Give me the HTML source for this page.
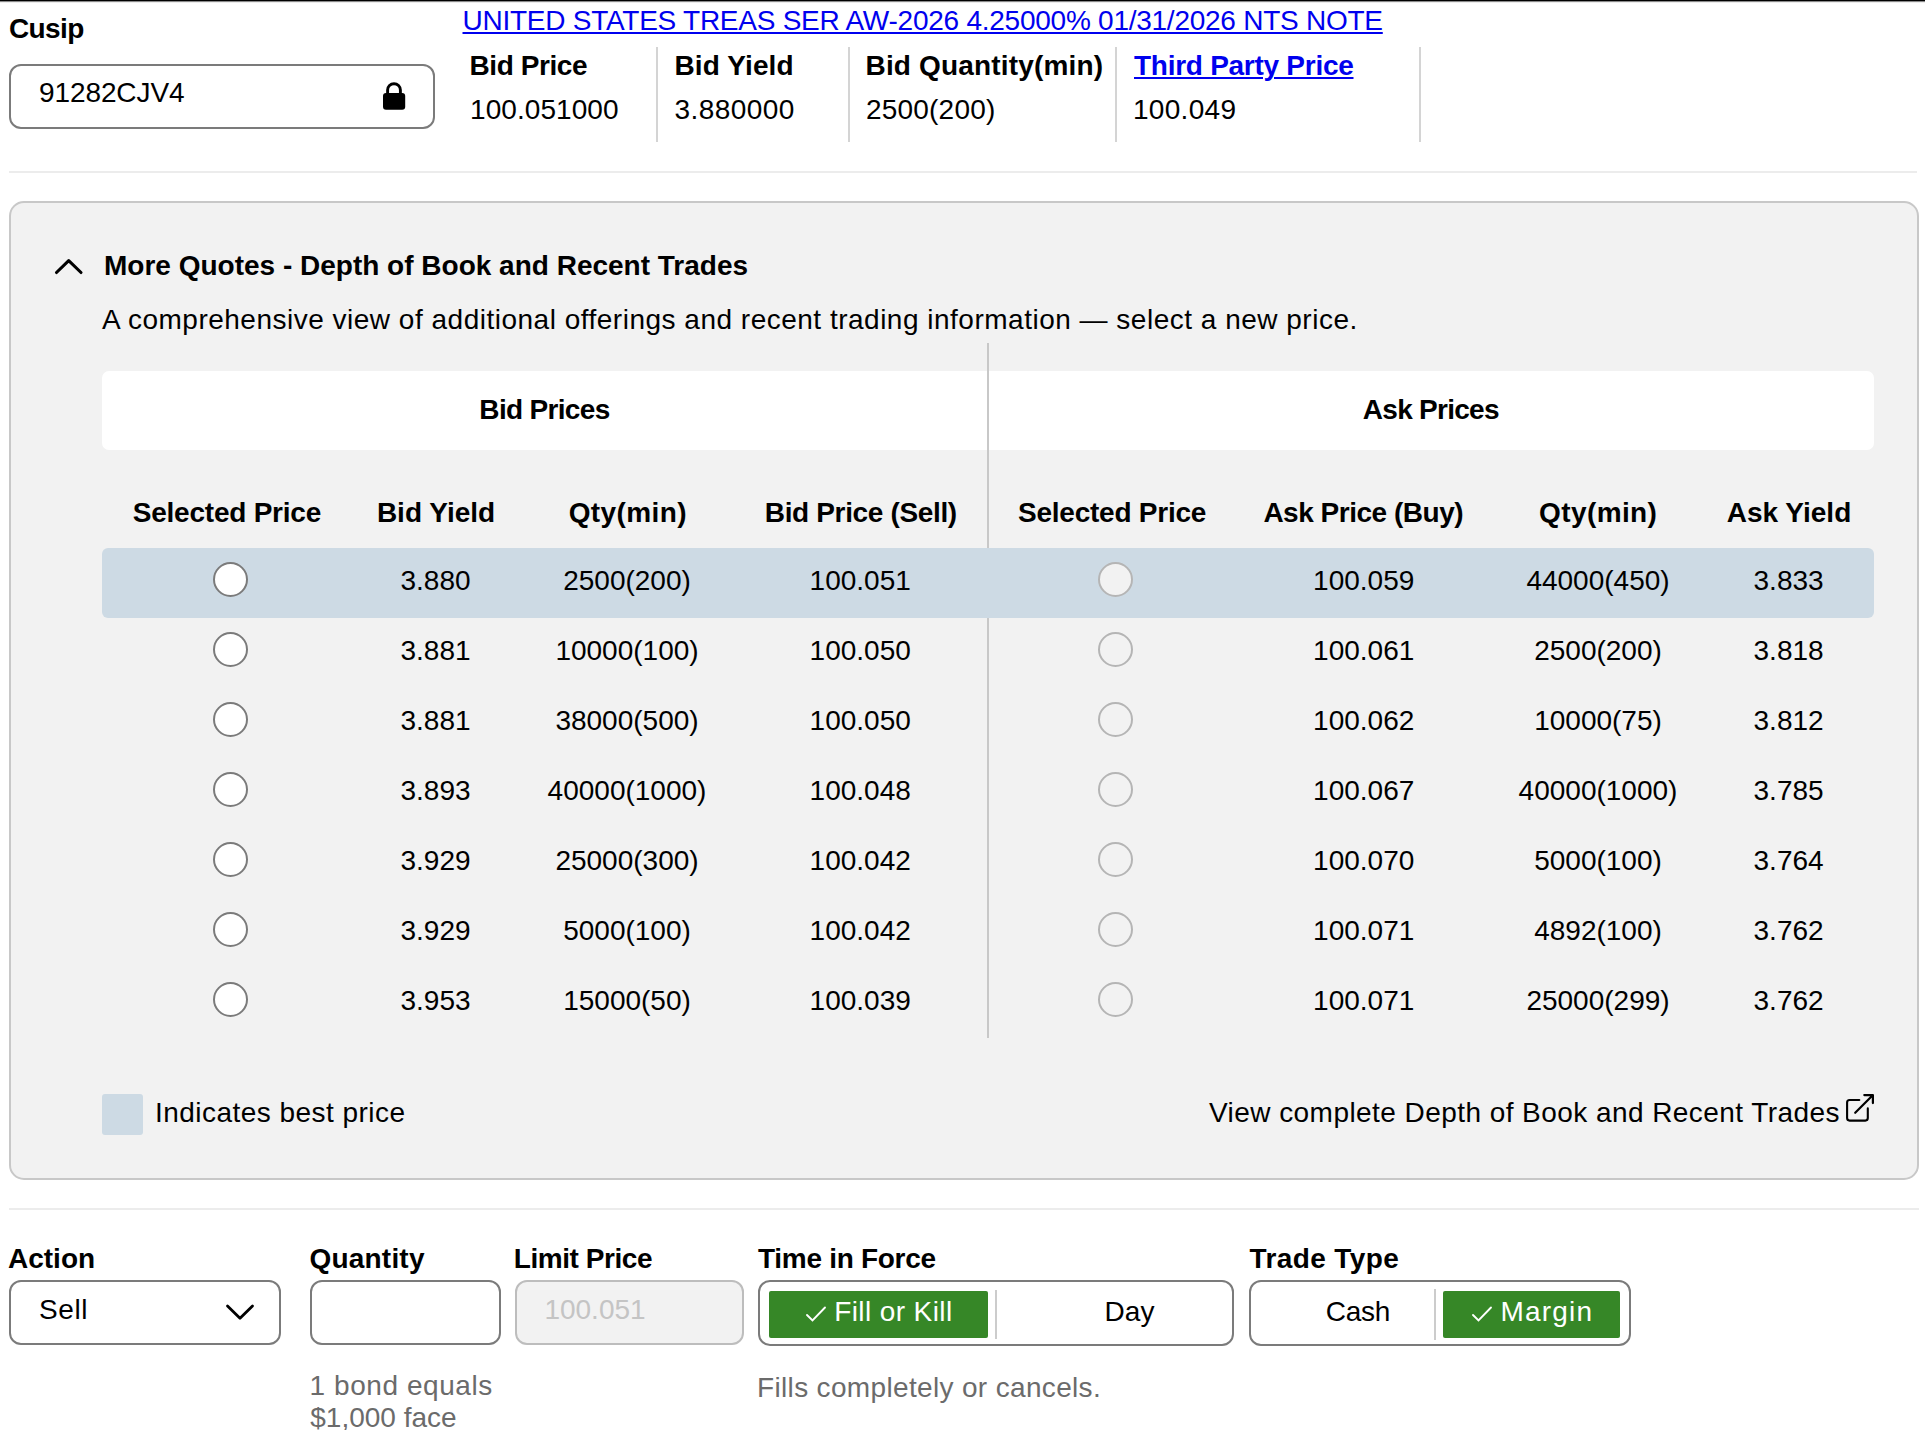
<!DOCTYPE html>
<html><head><meta charset="utf-8"><title>Bond Trade</title>
<style>
html,body{margin:0;padding:0;background:#fff;width:1925px;height:1430px;overflow:hidden;}
body{position:relative;font-family:"Liberation Sans", sans-serif;color:#000;}
</style></head><body>
<div style="position:absolute;left:0px;top:0px;width:1925px;height:1px;background:#000"></div>
<div style="position:absolute;left:0px;top:1px;width:1925px;height:1px;background:#8a8a8a"></div>
<div style="position:absolute;left:0px;top:2px;width:1925px;height:1px;background:#ececec"></div>
<div style="position:absolute;top:15px;font-size:28px;line-height:1;white-space:nowrap;color:#000;font-weight:700;letter-spacing:-0.6px;left:9px;">Cusip</div>
<div style="position:absolute;left:9px;top:64px;width:426px;height:65px;box-sizing:border-box;border:2px solid #7b7b7b;border-radius:12px;background:#fff"></div>
<div style="position:absolute;top:79px;font-size:28px;line-height:1;white-space:nowrap;color:#000;letter-spacing:-0.1px;left:39px;">91282CJV4</div>
<svg style="position:absolute;left:380px;top:80px" width="28" height="32" viewBox="0 0 28 32">
<path d="M7.6 13.5 V10.1 A6.4 6.4 0 0 1 20.4 10.1 V13.5" fill="none" stroke="#000" stroke-width="2.9"/>
<rect x="3" y="13" width="22.2" height="16.8" rx="3" fill="#000"/></svg>
<div style="position:absolute;top:7px;font-size:28px;line-height:1;white-space:nowrap;color:#0000ee;letter-spacing:-0.25px;left:462.5px;text-decoration:underline;text-underline-offset:2px;text-decoration-thickness:2px;">UNITED STATES TREAS SER AW-2026 4.25000% 01/31/2026 NTS NOTE</div>
<div style="position:absolute;top:52px;font-size:28px;line-height:1;white-space:nowrap;color:#000;font-weight:700;letter-spacing:-0.42px;left:469.5px;">Bid Price</div>
<div style="position:absolute;top:96px;font-size:28px;line-height:1;white-space:nowrap;color:#000;letter-spacing:0.07px;left:470px;">100.051000</div>
<div style="position:absolute;top:52px;font-size:28px;line-height:1;white-space:nowrap;color:#000;font-weight:700;letter-spacing:0.1px;left:674.5px;">Bid Yield</div>
<div style="position:absolute;top:96px;font-size:28px;line-height:1;white-space:nowrap;color:#000;letter-spacing:0.43px;left:674.5px;">3.880000</div>
<div style="position:absolute;top:52px;font-size:28px;line-height:1;white-space:nowrap;color:#000;font-weight:700;letter-spacing:0.17px;left:865.5px;">Bid Quantity(min)</div>
<div style="position:absolute;top:96px;font-size:28px;line-height:1;white-space:nowrap;color:#000;letter-spacing:0.2px;left:866px;">2500(200)</div>
<div style="position:absolute;top:52px;font-size:28px;line-height:1;white-space:nowrap;color:#0000ee;font-weight:700;letter-spacing:-0.27px;left:1134px;text-decoration:underline;text-underline-offset:2px;text-decoration-thickness:2px;">Third Party Price</div>
<div style="position:absolute;top:96px;font-size:28px;line-height:1;white-space:nowrap;color:#000;letter-spacing:0.3px;left:1133px;">100.049</div>
<div style="position:absolute;left:656px;top:47px;width:2px;height:95px;background:#d4d4d4"></div>
<div style="position:absolute;left:848px;top:47px;width:2px;height:95px;background:#d4d4d4"></div>
<div style="position:absolute;left:1115px;top:47px;width:2px;height:95px;background:#d4d4d4"></div>
<div style="position:absolute;left:1419px;top:47px;width:2px;height:95px;background:#d4d4d4"></div>
<div style="position:absolute;left:9px;top:171px;width:1908px;height:2px;background:#ececec"></div>
<div style="position:absolute;left:9px;top:201px;width:1910px;height:979px;box-sizing:border-box;border:2px solid #c8c8c8;border-radius:15px;background:#f2f2f2"></div>
<svg style="position:absolute;left:50px;top:252px" width="40" height="28" viewBox="0 0 40 28">
<polyline points="6.5,20.5 18.7,8.6 31,20.5" fill="none" stroke="#000" stroke-width="3.1" stroke-linecap="round" stroke-linejoin="round"/></svg>
<div style="position:absolute;top:252px;font-size:28px;line-height:1;white-space:nowrap;color:#000;font-weight:700;left:104px;">More Quotes - Depth of Book and Recent Trades</div>
<div style="position:absolute;top:306px;font-size:28px;line-height:1;white-space:nowrap;color:#000;letter-spacing:0.5px;left:102px;">A comprehensive view of additional offerings and recent trading information — select a new price.</div>
<div style="position:absolute;left:102px;top:371px;width:1772px;height:79px;background:#fff;border-radius:7px"></div>
<div style="position:absolute;left:987px;top:343px;width:2px;height:695px;background:#c8c8c8"></div>
<div style="position:absolute;top:396px;font-size:28px;line-height:1;white-space:nowrap;color:#000;font-weight:700;letter-spacing:-0.67px;left:44.799999999999955px;width:1000px;text-align:center;text-indent:-0.67px;">Bid Prices</div>
<div style="position:absolute;top:396px;font-size:28px;line-height:1;white-space:nowrap;color:#000;font-weight:700;letter-spacing:-0.73px;left:931.2px;width:1000px;text-align:center;text-indent:-0.73px;">Ask Prices</div>
<div style="position:absolute;top:499px;font-size:28px;line-height:1;white-space:nowrap;color:#000;font-weight:700;letter-spacing:-0.23px;left:-273px;width:1000px;text-align:center;text-indent:-0.23px;">Selected Price</div>
<div style="position:absolute;top:499px;font-size:28px;line-height:1;white-space:nowrap;color:#000;font-weight:700;left:-64px;width:1000px;text-align:center;">Bid Yield</div>
<div style="position:absolute;top:499px;font-size:28px;line-height:1;white-space:nowrap;color:#000;font-weight:700;letter-spacing:0.38px;left:127.60000000000002px;width:1000px;text-align:center;text-indent:0.38px;">Qty(min)</div>
<div style="position:absolute;top:499px;font-size:28px;line-height:1;white-space:nowrap;color:#000;font-weight:700;letter-spacing:-0.35px;left:361px;width:1000px;text-align:center;text-indent:-0.35px;">Bid Price (Sell)</div>
<div style="position:absolute;top:499px;font-size:28px;line-height:1;white-space:nowrap;color:#000;font-weight:700;letter-spacing:-0.23px;left:612.2px;width:1000px;text-align:center;text-indent:-0.23px;">Selected Price</div>
<div style="position:absolute;top:499px;font-size:28px;line-height:1;white-space:nowrap;color:#000;font-weight:700;letter-spacing:-0.48px;left:863.5px;width:1000px;text-align:center;text-indent:-0.48px;">Ask Price (Buy)</div>
<div style="position:absolute;top:499px;font-size:28px;line-height:1;white-space:nowrap;color:#000;font-weight:700;letter-spacing:0.38px;left:1098px;width:1000px;text-align:center;text-indent:0.38px;">Qty(min)</div>
<div style="position:absolute;top:499px;font-size:28px;line-height:1;white-space:nowrap;color:#000;font-weight:700;left:1289px;width:1000px;text-align:center;">Ask Yield</div>
<div style="position:absolute;left:102px;top:548px;width:1772px;height:70px;background:#cddae4;border-radius:6px"></div>
<div style="position:absolute;left:212.9px;top:562.0px;width:35px;height:35px;box-sizing:border-box;border:2px solid #7b7b7b;border-radius:50%;background:#fff"></div>
<div style="position:absolute;left:1098.0px;top:562.0px;width:35px;height:35px;box-sizing:border-box;border:2px solid #b5b5b5;border-radius:50%;background:#f2f2f2"></div>
<div style="position:absolute;top:567px;font-size:28px;line-height:1;white-space:nowrap;color:#000;left:-64.5px;width:1000px;text-align:center;">3.880</div>
<div style="position:absolute;top:567px;font-size:28px;line-height:1;white-space:nowrap;color:#000;left:127px;width:1000px;text-align:center;">2500(200)</div>
<div style="position:absolute;top:567px;font-size:28px;line-height:1;white-space:nowrap;color:#000;left:360.20000000000005px;width:1000px;text-align:center;">100.051</div>
<div style="position:absolute;top:567px;font-size:28px;line-height:1;white-space:nowrap;color:#000;left:863.7px;width:1000px;text-align:center;">100.059</div>
<div style="position:absolute;top:567px;font-size:28px;line-height:1;white-space:nowrap;color:#000;left:1098px;width:1000px;text-align:center;">44000(450)</div>
<div style="position:absolute;top:567px;font-size:28px;line-height:1;white-space:nowrap;color:#000;left:1288.6px;width:1000px;text-align:center;">3.833</div>
<div style="position:absolute;left:212.9px;top:632.0px;width:35px;height:35px;box-sizing:border-box;border:2px solid #7b7b7b;border-radius:50%;background:#fff"></div>
<div style="position:absolute;left:1098.0px;top:632.0px;width:35px;height:35px;box-sizing:border-box;border:2px solid #b5b5b5;border-radius:50%;background:#f2f2f2"></div>
<div style="position:absolute;top:637px;font-size:28px;line-height:1;white-space:nowrap;color:#000;left:-64.5px;width:1000px;text-align:center;">3.881</div>
<div style="position:absolute;top:637px;font-size:28px;line-height:1;white-space:nowrap;color:#000;left:127px;width:1000px;text-align:center;">10000(100)</div>
<div style="position:absolute;top:637px;font-size:28px;line-height:1;white-space:nowrap;color:#000;left:360.20000000000005px;width:1000px;text-align:center;">100.050</div>
<div style="position:absolute;top:637px;font-size:28px;line-height:1;white-space:nowrap;color:#000;left:863.7px;width:1000px;text-align:center;">100.061</div>
<div style="position:absolute;top:637px;font-size:28px;line-height:1;white-space:nowrap;color:#000;left:1098px;width:1000px;text-align:center;">2500(200)</div>
<div style="position:absolute;top:637px;font-size:28px;line-height:1;white-space:nowrap;color:#000;left:1288.6px;width:1000px;text-align:center;">3.818</div>
<div style="position:absolute;left:212.9px;top:702.0px;width:35px;height:35px;box-sizing:border-box;border:2px solid #7b7b7b;border-radius:50%;background:#fff"></div>
<div style="position:absolute;left:1098.0px;top:702.0px;width:35px;height:35px;box-sizing:border-box;border:2px solid #b5b5b5;border-radius:50%;background:#f2f2f2"></div>
<div style="position:absolute;top:707px;font-size:28px;line-height:1;white-space:nowrap;color:#000;left:-64.5px;width:1000px;text-align:center;">3.881</div>
<div style="position:absolute;top:707px;font-size:28px;line-height:1;white-space:nowrap;color:#000;left:127px;width:1000px;text-align:center;">38000(500)</div>
<div style="position:absolute;top:707px;font-size:28px;line-height:1;white-space:nowrap;color:#000;left:360.20000000000005px;width:1000px;text-align:center;">100.050</div>
<div style="position:absolute;top:707px;font-size:28px;line-height:1;white-space:nowrap;color:#000;left:863.7px;width:1000px;text-align:center;">100.062</div>
<div style="position:absolute;top:707px;font-size:28px;line-height:1;white-space:nowrap;color:#000;left:1098px;width:1000px;text-align:center;">10000(75)</div>
<div style="position:absolute;top:707px;font-size:28px;line-height:1;white-space:nowrap;color:#000;left:1288.6px;width:1000px;text-align:center;">3.812</div>
<div style="position:absolute;left:212.9px;top:772.0px;width:35px;height:35px;box-sizing:border-box;border:2px solid #7b7b7b;border-radius:50%;background:#fff"></div>
<div style="position:absolute;left:1098.0px;top:772.0px;width:35px;height:35px;box-sizing:border-box;border:2px solid #b5b5b5;border-radius:50%;background:#f2f2f2"></div>
<div style="position:absolute;top:777px;font-size:28px;line-height:1;white-space:nowrap;color:#000;left:-64.5px;width:1000px;text-align:center;">3.893</div>
<div style="position:absolute;top:777px;font-size:28px;line-height:1;white-space:nowrap;color:#000;left:127px;width:1000px;text-align:center;">40000(1000)</div>
<div style="position:absolute;top:777px;font-size:28px;line-height:1;white-space:nowrap;color:#000;left:360.20000000000005px;width:1000px;text-align:center;">100.048</div>
<div style="position:absolute;top:777px;font-size:28px;line-height:1;white-space:nowrap;color:#000;left:863.7px;width:1000px;text-align:center;">100.067</div>
<div style="position:absolute;top:777px;font-size:28px;line-height:1;white-space:nowrap;color:#000;left:1098px;width:1000px;text-align:center;">40000(1000)</div>
<div style="position:absolute;top:777px;font-size:28px;line-height:1;white-space:nowrap;color:#000;left:1288.6px;width:1000px;text-align:center;">3.785</div>
<div style="position:absolute;left:212.9px;top:842.0px;width:35px;height:35px;box-sizing:border-box;border:2px solid #7b7b7b;border-radius:50%;background:#fff"></div>
<div style="position:absolute;left:1098.0px;top:842.0px;width:35px;height:35px;box-sizing:border-box;border:2px solid #b5b5b5;border-radius:50%;background:#f2f2f2"></div>
<div style="position:absolute;top:847px;font-size:28px;line-height:1;white-space:nowrap;color:#000;left:-64.5px;width:1000px;text-align:center;">3.929</div>
<div style="position:absolute;top:847px;font-size:28px;line-height:1;white-space:nowrap;color:#000;left:127px;width:1000px;text-align:center;">25000(300)</div>
<div style="position:absolute;top:847px;font-size:28px;line-height:1;white-space:nowrap;color:#000;left:360.20000000000005px;width:1000px;text-align:center;">100.042</div>
<div style="position:absolute;top:847px;font-size:28px;line-height:1;white-space:nowrap;color:#000;left:863.7px;width:1000px;text-align:center;">100.070</div>
<div style="position:absolute;top:847px;font-size:28px;line-height:1;white-space:nowrap;color:#000;left:1098px;width:1000px;text-align:center;">5000(100)</div>
<div style="position:absolute;top:847px;font-size:28px;line-height:1;white-space:nowrap;color:#000;left:1288.6px;width:1000px;text-align:center;">3.764</div>
<div style="position:absolute;left:212.9px;top:912.0px;width:35px;height:35px;box-sizing:border-box;border:2px solid #7b7b7b;border-radius:50%;background:#fff"></div>
<div style="position:absolute;left:1098.0px;top:912.0px;width:35px;height:35px;box-sizing:border-box;border:2px solid #b5b5b5;border-radius:50%;background:#f2f2f2"></div>
<div style="position:absolute;top:917px;font-size:28px;line-height:1;white-space:nowrap;color:#000;left:-64.5px;width:1000px;text-align:center;">3.929</div>
<div style="position:absolute;top:917px;font-size:28px;line-height:1;white-space:nowrap;color:#000;left:127px;width:1000px;text-align:center;">5000(100)</div>
<div style="position:absolute;top:917px;font-size:28px;line-height:1;white-space:nowrap;color:#000;left:360.20000000000005px;width:1000px;text-align:center;">100.042</div>
<div style="position:absolute;top:917px;font-size:28px;line-height:1;white-space:nowrap;color:#000;left:863.7px;width:1000px;text-align:center;">100.071</div>
<div style="position:absolute;top:917px;font-size:28px;line-height:1;white-space:nowrap;color:#000;left:1098px;width:1000px;text-align:center;">4892(100)</div>
<div style="position:absolute;top:917px;font-size:28px;line-height:1;white-space:nowrap;color:#000;left:1288.6px;width:1000px;text-align:center;">3.762</div>
<div style="position:absolute;left:212.9px;top:982.0px;width:35px;height:35px;box-sizing:border-box;border:2px solid #7b7b7b;border-radius:50%;background:#fff"></div>
<div style="position:absolute;left:1098.0px;top:982.0px;width:35px;height:35px;box-sizing:border-box;border:2px solid #b5b5b5;border-radius:50%;background:#f2f2f2"></div>
<div style="position:absolute;top:987px;font-size:28px;line-height:1;white-space:nowrap;color:#000;left:-64.5px;width:1000px;text-align:center;">3.953</div>
<div style="position:absolute;top:987px;font-size:28px;line-height:1;white-space:nowrap;color:#000;left:127px;width:1000px;text-align:center;">15000(50)</div>
<div style="position:absolute;top:987px;font-size:28px;line-height:1;white-space:nowrap;color:#000;left:360.20000000000005px;width:1000px;text-align:center;">100.039</div>
<div style="position:absolute;top:987px;font-size:28px;line-height:1;white-space:nowrap;color:#000;left:863.7px;width:1000px;text-align:center;">100.071</div>
<div style="position:absolute;top:987px;font-size:28px;line-height:1;white-space:nowrap;color:#000;left:1098px;width:1000px;text-align:center;">25000(299)</div>
<div style="position:absolute;top:987px;font-size:28px;line-height:1;white-space:nowrap;color:#000;left:1288.6px;width:1000px;text-align:center;">3.762</div>
<div style="position:absolute;left:102px;top:1094px;width:41px;height:41px;background:#cddae4;border-radius:3px"></div>
<div style="position:absolute;top:1099px;font-size:28px;line-height:1;white-space:nowrap;color:#000;letter-spacing:0.46px;left:155px;">Indicates best price</div>
<div style="position:absolute;top:1099px;font-size:28px;line-height:1;white-space:nowrap;color:#000;letter-spacing:0.44px;left:1209px;">View complete Depth of Book and Recent Trades</div>
<svg style="position:absolute;left:1840px;top:1088px" width="40" height="40" viewBox="0 0 40 40">
<path d="M19.3 12 H9.6 A2.5 2.5 0 0 0 7.1 14.5 V30.1 A2.5 2.5 0 0 0 9.6 32.6 H25.3 A2.5 2.5 0 0 0 27.8 30.1 V20.4" fill="none" stroke="#000" stroke-width="2.1" stroke-linecap="round"/>
<path d="M15.2 24.8 L32.2 7.8 M24.3 7.1 H32.9 V15.1" fill="none" stroke="#000" stroke-width="2.2" stroke-linecap="round" stroke-linejoin="round"/></svg>
<div style="position:absolute;left:9px;top:1208px;width:1910px;height:2px;background:#ececec"></div>
<div style="position:absolute;top:1245px;font-size:28px;line-height:1;white-space:nowrap;color:#000;font-weight:700;left:8px;">Action</div>
<div style="position:absolute;top:1245px;font-size:28px;line-height:1;white-space:nowrap;color:#000;font-weight:700;letter-spacing:0.2px;left:309.5px;">Quantity</div>
<div style="position:absolute;top:1245px;font-size:28px;line-height:1;white-space:nowrap;color:#000;font-weight:700;letter-spacing:-0.44px;left:513.8px;">Limit Price</div>
<div style="position:absolute;top:1245px;font-size:28px;line-height:1;white-space:nowrap;color:#000;font-weight:700;letter-spacing:-0.29px;left:758px;">Time in Force</div>
<div style="position:absolute;top:1245px;font-size:28px;line-height:1;white-space:nowrap;color:#000;font-weight:700;letter-spacing:0.38px;left:1249.6px;">Trade Type</div>
<div style="position:absolute;left:9px;top:1280px;width:272px;height:65px;box-sizing:border-box;border:2px solid #7b7b7b;border-radius:12px;background:#fff"></div>
<div style="position:absolute;top:1296px;font-size:28px;line-height:1;white-space:nowrap;color:#000;letter-spacing:0.6px;left:39px;">Sell</div>
<svg style="position:absolute;left:220px;top:1298px" width="40" height="28" viewBox="0 0 40 28">
<polyline points="7.5,8 20,20.3 32.5,8" fill="none" stroke="#000" stroke-width="2.8" stroke-linecap="round" stroke-linejoin="round"/></svg>
<div style="position:absolute;left:310px;top:1280px;width:191px;height:65px;box-sizing:border-box;border:2px solid #7b7b7b;border-radius:12px;background:#fff"></div>
<div style="position:absolute;left:515px;top:1280px;width:229px;height:65px;box-sizing:border-box;border:2px solid #bdbdbd;border-radius:12px;background:#f2f2f2"></div>
<div style="position:absolute;top:1296px;font-size:28px;line-height:1;white-space:nowrap;color:#c4c4c4;left:544.4px;">100.051</div>
<div style="position:absolute;left:758px;top:1280px;width:476px;height:66px;box-sizing:border-box;border:2px solid #7b7b7b;border-radius:12px;background:#fff"></div>
<div style="position:absolute;left:769px;top:1291px;width:219px;height:47px;background:#368727;border-radius:2px"></div>
<svg style="position:absolute;left:800px;top:1300px" width="32" height="28" viewBox="0 0 32 28">
<polyline points="7,15 12.5,20.5 25,7.5" fill="none" stroke="#fff" stroke-width="1.9" stroke-linecap="round"/></svg>
<div style="position:absolute;top:1298px;font-size:28px;line-height:1;white-space:nowrap;color:#fff;letter-spacing:0.4px;left:834.2px;">Fill or Kill</div>
<div style="position:absolute;left:995px;top:1290px;width:2px;height:49px;background:#cccccc"></div>
<div style="position:absolute;top:1298px;font-size:28px;line-height:1;white-space:nowrap;color:#000;left:629.5px;width:1000px;text-align:center;">Day</div>
<div style="position:absolute;left:1249px;top:1280px;width:382px;height:66px;box-sizing:border-box;border:2px solid #7b7b7b;border-radius:12px;background:#fff"></div>
<div style="position:absolute;top:1298px;font-size:28px;line-height:1;white-space:nowrap;color:#000;letter-spacing:-0.3px;left:858px;width:1000px;text-align:center;text-indent:-0.3px;">Cash</div>
<div style="position:absolute;left:1434px;top:1289px;width:2px;height:51px;background:#cccccc"></div>
<div style="position:absolute;left:1443px;top:1291px;width:177px;height:47px;background:#368727;border-radius:2px"></div>
<svg style="position:absolute;left:1466px;top:1300px" width="32" height="28" viewBox="0 0 32 28">
<polyline points="7,15 12.5,20.5 25,7.5" fill="none" stroke="#fff" stroke-width="1.9" stroke-linecap="round"/></svg>
<div style="position:absolute;top:1298px;font-size:28px;line-height:1;white-space:nowrap;color:#fff;letter-spacing:1.2px;left:1500.4px;">Margin</div>
<div style="position:absolute;top:1372px;font-size:28px;line-height:1;white-space:nowrap;color:#6b6b6b;letter-spacing:0.57px;left:309.5px;">1 bond equals</div>
<div style="position:absolute;top:1404px;font-size:28px;line-height:1;white-space:nowrap;color:#6b6b6b;left:310.3px;">$1,000 face</div>
<div style="position:absolute;top:1374px;font-size:28px;line-height:1;white-space:nowrap;color:#6b6b6b;letter-spacing:0.34px;left:757px;">Fills completely or cancels.</div>
</body></html>
